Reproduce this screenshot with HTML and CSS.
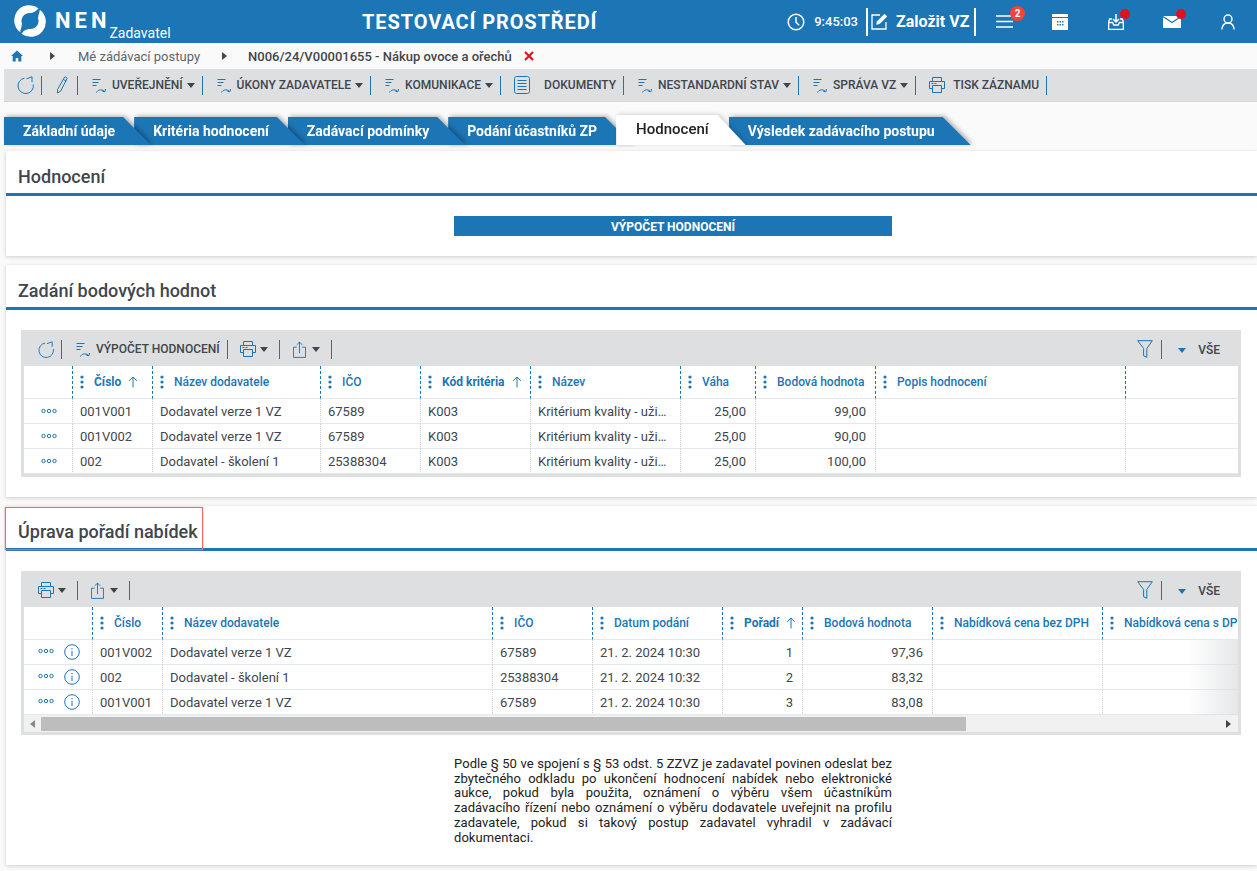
FILE: index.html

```html
<!DOCTYPE html>
<html lang="cs">
<head>
  <meta charset="UTF-8" />
  <meta name="viewport" content="width=device-width, initial-scale=1.0"/>
  <title>Hodnocení | NEN</title>
  <link rel="stylesheet" href="styles.css">
</head>
<body>

<svg class="defs" aria-hidden="true">
  <symbol id="i-refresh" viewBox="0 0 18 18"><path d="M7.500 2.200A7.700 7.700 0 1 0 16.300 8.500M9.500 2.800l5.500-2v5.400" fill="none" stroke="currentColor"/></symbol>
  <symbol id="i-pencil" viewBox="0 0 12 18"><path d="M8.500 1.200c1-.8 2.800.2 2.400 1.600L4.600 15.200 1.400 17l.2-3.600zM7.300 3.400l3 1.700" fill="none" stroke="currentColor"/></symbol>
  <symbol id="i-flow" viewBox="0 0 14 16"><path d="M0.500 2.500h8M0.500 5.500h6M0.500 8.500h4M4.500 15.500c1.200-2.800 5-3.500 7.500-1.500M13.500 12l-.6 2.800-2.600-.5" fill="none" stroke="currentColor"/></symbol>
  <symbol id="i-print" viewBox="0 0 16 16"><path d="M3.500 4.500v-4h9v4M3.500 11.500h-3v-7h15v7h-3M3.500 8.500h9v7h-9z" fill="none" stroke="currentColor"/><path d="M2.500 6h2v1h-2zM5.500 6h2v1h-2z" fill="currentColor"/></symbol>
  <symbol id="i-doc" viewBox="0 0 16 18"><path d="M2.500 .5h11c1 0 2 .8 2 2v13c0 1.200-1 2-2 2h-11c-1 0-2-.8-2-2v-13c0-1.200 1-2 2-2zM3.500 4.500h9M3.500 7.500h9M3.500 10.500h9M3.500 13.500h9" fill="none" stroke="currentColor"/></symbol>
  <symbol id="i-share" viewBox="0 0 14 18"><path d="M4 6.500H.5v11h13v-11H10M7 13V1M4 4l3-3 3 3" fill="none" stroke="currentColor"/></symbol>
  <symbol id="i-filter" viewBox="0 0 16 18"><path d="M.7.700h14.600L9.800 8.500v8.800L6.600 15.800V8.500z" fill="none" stroke="currentColor"/></symbol>
  <symbol id="i-dots" viewBox="0 0 16 6"><g fill="none" stroke="currentColor"><circle cx="2.500" cy="3" r="1.700"/><circle cx="8" cy="3" r="1.700"/><circle cx="13.500" cy="3" r="1.700"/></g></symbol>
  <symbol id="i-info" viewBox="0 0 16 16"><circle cx="8" cy="8" r="7.300" fill="none" stroke="currentColor"/><path d="M7.500 4h1v1.200h-1zM7.500 6.800h1v5.200h-1z" fill="currentColor"/></symbol>
  <symbol id="i-up" viewBox="0 0 10 12"><path d="M5 11.500V1M1.200 4.800 5 1l3.800 3.800" fill="none" stroke="currentColor"/></symbol>
  <symbol id="i-grip" viewBox="0 0 4 14"><circle cx="2" cy="2" r="1.600" fill="currentColor"/><circle cx="2" cy="7" r="1.600" fill="currentColor"/><circle cx="2" cy="12" r="1.600" fill="currentColor"/></symbol>
</svg>

<header class="topbar">
  <div class="brand">
    <svg class="logo" viewBox="0 0 34 34">
      <path d="M26 3.500A16 16 0 0 0 6.500 29C7 26 8 24 8.500 20A8.500 8.500 0 0 1 17 8.500C20 8.500 24 7 26 3.500z" fill="#fff"/>
      <path d="M26 3.500A16 16 0 0 0 6.500 29C7 26 8 24 8.500 20A8.500 8.500 0 0 1 17 8.500C20 8.500 24 7 26 3.500z" fill="#fff" transform="rotate(180 17 17)"/>
    </svg>
    <span class="brand-name">NEN</span>
    <span class="brand-role">Zadavatel</span>
  </div>
  <div class="env-title">TESTOVACÍ PROSTŘEDÍ</div>
  <div class="top-right">
    <svg class="clock" viewBox="0 0 18 18"><circle cx="9" cy="9" r="7.800" fill="none" stroke="#fff" stroke-width="1.500"/><path d="M9 4v5.300l3.200 3" fill="none" stroke="#fff" stroke-width="1.500"/></svg>
    <span class="clock-time">9:45:03</span>
    <a class="new-vz">
      <svg class="edit" viewBox="0 0 17 17"><path d="M15 9v7H1V2h8" fill="none" stroke="#fff" stroke-width="1.300"/><path d="M13.500.8l2.700 2.700-7.500 7.500-3.500.8.800-3.500z" fill="#fff"/></svg>
      Založit VZ
    </a>
    <div class="top-icon">
      <svg class="ti-menu" viewBox="0 0 17 15"><path d="M0 2h17M0 7.500h17M0 13h17" stroke="#fff" stroke-width="1.500"/></svg>
      <span class="badge">2</span>
    </div>
    <div class="top-icon">
      <svg class="ti-cal" viewBox="0 0 16 16"><path d="M0 0h16v16H0z" fill="#fff"/><path d="M0 3.500h16" stroke="#1c75b5"/><path d="M5 7h1.500v1.500H5zM7.500 7H9v1.500H7.500zM10 7h1.500v1.500H10zM5 10h1.500v1.500H5zM7.500 10H9v1.500H7.500zM10 10h1.500v1.500H10z" fill="#1c75b5"/></svg>
    </div>
    <div class="top-icon">
      <svg class="ti-inbox" viewBox="0 0 16 16"><path d="M4 5H1.500L.7 8.500v7h14.600v-7L14.500 5H12" fill="none" stroke="#fff" stroke-width="1.300"/><path d="M.7 8.500h4l1 2.500h4.600l1-2.500h4" fill="none" stroke="#fff" stroke-width="1.300"/><path d="M8 0v7.500M5 5l3 3 3-3" fill="none" stroke="#fff" stroke-width="1.500"/></svg>
      <span class="dot"></span>
    </div>
    <div class="top-icon">
      <svg class="ti-mail" viewBox="0 0 18 12"><path d="M0 0h18v12H0z" fill="#fff"/><path d="M0 .5l9 6 9-6" fill="none" stroke="#1c75b5" stroke-width="1.200"/></svg>
      <span class="dot"></span>
    </div>
    <div class="top-icon">
      <svg class="ti-user" viewBox="0 0 14 16"><circle cx="7" cy="5" r="4" fill="none" stroke="#fff" stroke-width="1.400"/><path d="M.8 15.500c.4-4 2.800-6.500 6.200-6.500s5.800 2.500 6.200 6.500" fill="none" stroke="#fff" stroke-width="1.400"/></svg>
    </div>
  </div>
</header>

<nav class="crumbs">
  <svg class="home" viewBox="0 0 12 12"><path d="M6 .5 0 6h1.700v5.500h3V8h2.600v3.500h3V6H12z" fill="#1c75b5"/></svg>
  <span class="crumb-arrow first"></span>
  <span class="crumb">Mé zádávací postupy</span>
  <span class="crumb-arrow"></span>
  <span class="crumb current">N006/24/V00001655 - Nákup ovoce a ořechů</span>
  <svg class="crumb-close" viewBox="0 0 10 10"><path d="M1 1l8 8M9 1l-8 8" stroke="#e3141e" stroke-width="2.200"/></svg>
</nav>

<div class="toolbar">
  <div class="tool tool-first"><svg class="ic ic18"><use href="#i-refresh"/></svg></div>
  <div class="tool tool-pencil"><svg class="ic ic-pencil"><use href="#i-pencil"/></svg></div>
  <div class="tool"><svg class="ic ic-flow"><use href="#i-flow"/></svg><span>UVEŘEJNĚNÍ</span><i class="caret"></i></div>
  <div class="tool"><svg class="ic ic-flow"><use href="#i-flow"/></svg><span>ÚKONY ZADAVATELE</span><i class="caret"></i></div>
  <div class="tool"><svg class="ic ic-flow"><use href="#i-flow"/></svg><span>KOMUNIKACE</span><i class="caret"></i></div>
  <div class="tool tool-doc"><svg class="ic ic-doc"><use href="#i-doc"/></svg><span>DOKUMENTY</span></div>
  <div class="tool"><svg class="ic ic-flow"><use href="#i-flow"/></svg><span>NESTANDARDNÍ STAV</span><i class="caret"></i></div>
  <div class="tool"><svg class="ic ic-flow"><use href="#i-flow"/></svg><span>SPRÁVA VZ</span><i class="caret"></i></div>
  <div class="tool tool-print"><svg class="ic ic16"><use href="#i-print"/></svg><span>TISK ZÁZNAMU</span></div>
</div>

<div class="tabs">
  <div class="tab-wrap t1"><a class="tab">Základní údaje</a></div>
  <div class="tab-wrap t2"><a class="tab">Kritéria hodnocení</a></div>
  <div class="tab-wrap t3"><a class="tab">Zadávací podmínky</a></div>
  <div class="tab-wrap t4"><a class="tab">Podání účastníků ZP</a></div>
  <div class="tab-wrap t5"><a class="tab tab-active">Hodnocení</a></div>
  <div class="tab-wrap t6"><a class="tab">Výsledek zadávacího postupu</a></div>
</div>

<section class="card">
  <h2 class="card-title">Hodnocení</h2>
  <div class="card-body">
    <a class="btn-wide">VÝPOČET HODNOCENÍ</a>
  </div>
</section>

<section class="card">
  <h2 class="card-title">Zadání bodových hodnot</h2>
  <div class="card-body">
    <div class="grid">
      <div class="grid-bar">
        <div class="tool tool-g1"><svg class="ic ic17"><use href="#i-refresh"/></svg></div>
        <div class="tool"><svg class="ic ic-flow"><use href="#i-flow"/></svg><span>VÝPOČET HODNOCENÍ</span></div>
        <div class="tool tool-p"><svg class="ic ic16"><use href="#i-print"/></svg><i class="caret"></i></div>
        <div class="tool tool-sm"><svg class="ic ic-share"><use href="#i-share"/></svg><i class="caret"></i></div>
        <div class="bar-right">
          <svg class="ic ic-filter"><use href="#i-filter"/></svg>
          <i class="bar-sep"></i>
          <i class="caret caret-blue"></i>
          <span>VŠE</span>
        </div>
      </div>
      <div class="grid-view">
        <table class="tbl tbl-a">
          <colgroup>
            <col class="w48"><col class="w80"><col class="w168"><col class="w100"><col class="w110"><col class="w150"><col class="w75"><col class="w120"><col class="w250"><col class="w113">
          </colgroup>
          <thead>
            <tr>
              <th></th>
              <th><svg class="grip"><use href="#i-grip"/></svg><b>Číslo</b><svg class="sort"><use href="#i-up"/></svg></th>
              <th><svg class="grip"><use href="#i-grip"/></svg>Název dodavatele</th>
              <th><svg class="grip"><use href="#i-grip"/></svg>IČO</th>
              <th><svg class="grip"><use href="#i-grip"/></svg><b>Kód kritéria</b><svg class="sort"><use href="#i-up"/></svg></th>
              <th><svg class="grip"><use href="#i-grip"/></svg>Název</th>
              <th><svg class="grip"><use href="#i-grip"/></svg>Váha</th>
              <th><svg class="grip"><use href="#i-grip"/></svg>Bodová hodnota</th>
              <th><svg class="grip"><use href="#i-grip"/></svg>Popis hodnocení</th>
              <th></th>
            </tr>
          </thead>
          <tbody>
            <tr>
              <td class="acts"><svg class="more"><use href="#i-dots"/></svg></td>
              <td>001V001</td><td>Dodavatel verze 1 VZ</td><td>67589</td><td>K003</td><td>Kritérium kvality - uživatelská</td><td class="num">25,00</td><td class="num">99,00</td><td></td><td></td>
            </tr>
            <tr>
              <td class="acts"><svg class="more"><use href="#i-dots"/></svg></td>
              <td>001V002</td><td>Dodavatel verze 1 VZ</td><td>67589</td><td>K003</td><td>Kritérium kvality - uživatelská</td><td class="num">25,00</td><td class="num">90,00</td><td></td><td></td>
            </tr>
            <tr>
              <td class="acts"><svg class="more"><use href="#i-dots"/></svg></td>
              <td>002</td><td>Dodavatel - školení 1</td><td>25388304</td><td>K003</td><td>Kritérium kvality - uživatelská</td><td class="num">25,00</td><td class="num">100,00</td><td></td><td></td>
            </tr>
          </tbody>
        </table>
      </div>
    </div>
  </div>
</section>

<section class="card card-last">
  <h2 class="card-title">Úprava pořadí nabídek</h2>
  <div class="highlight"></div>
  <div class="card-body">
    <div class="grid">
      <div class="grid-bar">
        <div class="tool tool-g2"><svg class="ic ic16"><use href="#i-print"/></svg><i class="caret"></i></div>
        <div class="tool tool-sm"><svg class="ic ic-share"><use href="#i-share"/></svg><i class="caret"></i></div>
        <div class="bar-right">
          <svg class="ic ic-filter"><use href="#i-filter"/></svg>
          <i class="bar-sep"></i>
          <i class="caret caret-blue"></i>
          <span>VŠE</span>
        </div>
      </div>
      <div class="grid-view">
        <table class="tbl tbl-b">
          <colgroup>
            <col class="w68"><col class="w70"><col class="w330"><col class="w100"><col class="w130"><col class="w80"><col class="w130"><col class="w170"><col class="w170">
          </colgroup>
          <thead>
            <tr>
              <th></th>
              <th><svg class="grip"><use href="#i-grip"/></svg>Číslo</th>
              <th><svg class="grip"><use href="#i-grip"/></svg>Název dodavatele</th>
              <th><svg class="grip"><use href="#i-grip"/></svg>IČO</th>
              <th><svg class="grip"><use href="#i-grip"/></svg>Datum podání</th>
              <th><svg class="grip"><use href="#i-grip"/></svg><b>Pořadí</b><svg class="sort"><use href="#i-up"/></svg></th>
              <th><svg class="grip"><use href="#i-grip"/></svg>Bodová hodnota</th>
              <th><svg class="grip"><use href="#i-grip"/></svg>Nabídková cena bez DPH</th>
              <th><svg class="grip"><use href="#i-grip"/></svg>Nabídková cena s DPH</th>
            </tr>
          </thead>
          <tbody>
            <tr>
              <td class="acts"><svg class="more"><use href="#i-dots"/></svg><svg class="info"><use href="#i-info"/></svg></td>
              <td>001V002</td><td>Dodavatel verze 1 VZ</td><td>67589</td><td>21. 2. 2024 10:30</td><td class="num">1</td><td class="num">97,36</td><td></td><td></td>
            </tr>
            <tr>
              <td class="acts"><svg class="more"><use href="#i-dots"/></svg><svg class="info"><use href="#i-info"/></svg></td>
              <td>002</td><td>Dodavatel - školení 1</td><td>25388304</td><td>21. 2. 2024 10:32</td><td class="num">2</td><td class="num">83,32</td><td></td><td></td>
            </tr>
            <tr>
              <td class="acts"><svg class="more"><use href="#i-dots"/></svg><svg class="info"><use href="#i-info"/></svg></td>
              <td>001V001</td><td>Dodavatel verze 1 VZ</td><td>67589</td><td>21. 2. 2024 10:30</td><td class="num">3</td><td class="num">83,08</td><td></td><td></td>
            </tr>
          </tbody>
        </table>
        <div class="fade"></div>
      </div>
      <div class="scrollbar">
        <i class="sb-left"></i>
        <div class="sb-thumb"></div>
        <i class="sb-right"></i>
      </div>
    </div>
    <p class="note">Podle § 50 ve spojení s § 53 odst. 5 ZZVZ je zadavatel povinen odeslat bez zbytečného odkladu po ukončení hodnocení nabídek nebo elektronické aukce, pokud byla použita, oznámení o výběru všem účastníkům zadávacího řízení nebo oznámení o výběru dodavatele uveřejnit na profilu zadavatele, pokud si takový postup zadavatel vyhradil v zadávací dokumentaci.</p>
  </div>
</section>

</body>
</html>
```

FILE: styles.css

```css
* {
  box-sizing: border-box;
}
body {
  margin: 0;
  font-family: Roboto, 'Liberation Sans', sans-serif;
  font-size: 12px;
  color: #3f464d;
  background-color: #fafafa;
}
.defs {
  display: none;
}

/* top bar */
.topbar {
  display: flex;
  align-items: center;
  height: 43px;
  background-color: #1c75b5;
  color: #fff;
}
.brand {
  display: flex;
  width: 362px;
  height: 43px;
  padding-left: 14px;
}
.logo {
  width: 32px;
  height: 32px;
  margin-top: 5px;
}
.brand-name {
  margin: 5px -1px 0 9px;
  font-size: 22px;
  font-weight: 700;
  letter-spacing: 4px;
  line-height: 32px;
}
.brand-role {
  margin: 26px 0 0 0;
  font-size: 14px;
  line-height: 15px;
}
.env-title {
  font-size: 20px;
  font-weight: 700;
  letter-spacing: 0.9px;
  white-space: nowrap;
}
.top-right {
  display: flex;
  align-items: center;
  margin-left: auto;
  padding-right: 1px;
}
.clock {
  width: 18px;
  height: 18px;
}
.clock-time {
  margin: 0 8px 0 9px;
  font-size: 13px;
  font-weight: 500;
}
.new-vz {
  display: flex;
  align-items: center;
  gap: 8px;
  height: 28px;
  width: 110px;
  padding: 0 0 0 3px;
  border-left: 2px solid #fff;
  border-right: 2px solid #fff;
  font-size: 16px;
  font-weight: 700;
  white-space: nowrap;
}
.edit {
  width: 17px;
  height: 17px;
}
.top-icon {
  position: relative;
  display: flex;
  align-items: center;
  justify-content: center;
  width: 56px;
  height: 43px;
}
.ti-menu { width: 17px; height: 15px; }
.ti-cal { width: 16px; height: 16px; }
.ti-inbox { width: 16px; height: 16px; }
.ti-mail { width: 18px; height: 12px; }
.ti-user { width: 14px; height: 16px; }
.badge {
  position: absolute;
  top: 6px;
  left: 34px;
  width: 15px;
  height: 15px;
  border-radius: 50%;
  background-color: #f44336;
  color: #fff;
  font-size: 10px;
  font-weight: 700;
  line-height: 15px;
  text-align: center;
}
.dot {
  position: absolute;
  top: 9px;
  left: 32px;
  width: 10px;
  height: 10px;
  border-radius: 50%;
  background-color: #e01020;
}

/* breadcrumbs */
.crumbs {
  display: flex;
  align-items: center;
  height: 26px;
  padding-left: 11px;
  font-size: 13px;
}
.home {
  width: 12px;
  height: 12px;
}
.crumb-arrow {
  width: 0;
  height: 0;
  margin: 0 21px 0 22px;
  border-left: 5px solid #3f464d;
  border-top: 4px solid transparent;
  border-bottom: 4px solid transparent;
}
.crumb-arrow.first {
  margin: 0 23px 0 27px;
}
.crumb {
  color: #5d646b;
  white-space: nowrap;
}
.crumb.current {
  color: #3f464d;
  font-weight: 500;
}
.crumb-close {
  width: 10px;
  height: 10px;
  margin-left: 12px;
}

/* toolbars */
.toolbar {
  display: flex;
  align-items: center;
  height: 33px;
  margin-left: 4px;
  background-color: #dddfe1;
  border-bottom: 1px solid #d5d7d9;
}
.tool {
  display: flex;
  align-items: center;
  height: 19px;
  padding: 0 7px 0 14px;
  border-right: 1px solid #1c75b5;
  font-weight: 500;
  white-space: nowrap;
}
.tool span {
  margin-left: 6px;
}
.tool-first {
  padding-left: 13px;
  padding-right: 6px;
}
.tool-pencil {
  padding-right: 9px;
}
.tool-doc {
  padding-left: 13px;
}
.tool-doc span {
  margin-left: 14px;
}
.tool-print {
  padding-left: 13px;
}
.tool-print span {
  margin-left: 8px;
}
.ic {
  color: #1c75b5;
  flex: none;
}
.ic18 { width: 18px; height: 18px; }
.ic17 { width: 17px; height: 17px; }
.ic16 { width: 16px; height: 16px; }
.ic-pencil { width: 12px; height: 18px; }
.ic-flow { width: 14px; height: 16px; }
.ic-doc { width: 16px; height: 18px; }
.ic-share { width: 13px; height: 17px; }
.ic-filter { width: 16px; height: 18px; }
.caret {
  width: 0;
  height: 0;
  margin-left: 4px;
  border-top: 5px solid #3f464d;
  border-left: 4px solid transparent;
  border-right: 4px solid transparent;
}
.caret-blue {
  margin: 2px 12px 0 0;
  border-top-color: #1c75b5;
}

/* tabs */
.tabs {
  display: flex;
  align-items: flex-end;
  height: 43px;
  padding: 0 0 0 4px;
}
.tab-wrap {
  position: relative;
  margin-right: -17px;
  filter: drop-shadow(2px -1px 2px rgba(0, 0, 0, 0.3));
}
.tab {
  display: block;
  height: 28px;
  padding: 0 36px 0 19px;
  background-color: #1c75b5;
  color: #fff;
  font-size: 14px;
  font-weight: 700;
  line-height: 29px;
  white-space: nowrap;
  clip-path: polygon(0 0, calc(100% - 28px) 0, 100% 100%, 0 100%);
}
.t1 { z-index: 6; }
.t2 { z-index: 5; }
.t3 { z-index: 4; }
.t4 { z-index: 3; }
.t5 { z-index: 7; filter: drop-shadow(2px -1px 2px rgba(0, 0, 0, 0.15)); }
.t6 { z-index: 1; }
.tab-active {
  height: 30px;
  padding: 0 37px 0 20px;
  background-color: #fff;
  color: #222;
  font-size: 15px;
  font-weight: 500;
  line-height: 29px;
}

/* cards */
.card {
  position: relative;
  margin: 6px 0 9px 6px;
  background-color: #fff;
  box-shadow: 0 1px 4px rgba(0, 0, 0, 0.18);
}
.card-title {
  height: 45px;
  margin: 0;
  padding: 0 0 0 12px;
  border-bottom: 3px solid #1c75b5;
  color: #3f464d;
  font-size: 18px;
  font-weight: 500;
  line-height: 51px;
}
.card + .card {
  margin-top: 0;
}
.card-body {
  padding: 20px 16px 20px 15px;
}
.btn-wide {
  display: block;
  width: 438px;
  height: 20px;
  margin-left: 433px;
  background-color: #1c75b5;
  color: #fff;
  font-weight: 700;
  line-height: 22px;
  text-align: center;
}
.highlight {
  position: absolute;
  top: 1px;
  left: -1px;
  width: 198px;
  height: 43px;
  border: 1px solid #f4646c;
  box-shadow: 0 0 1px #f4646c;
}

/* data grids */
.grid {
  padding: 0 3px 3px 3px;
  background-color: #dddfe1;
}
.grid-bar {
  display: flex;
  align-items: center;
  height: 36px;
  padding-top: 2px;
}
.tool-g1 {
  padding-left: 14px;
  padding-right: 6px;
}
.tool-g2 {
  padding-right: 11px;
}
.tool-p {
  padding-left: 12px;
  padding-right: 11px;
}
.tool-sm {
  padding-left: 13px;
  padding-right: 11px;
}
.tool-sm .caret {
  margin-left: 6px;
}
.bar-right {
  display: flex;
  align-items: center;
  margin-left: auto;
  padding-right: 18px;
  font-weight: 500;
}
.bar-right span {
  margin-top: 2px;
}
.bar-sep {
  width: 1px;
  height: 19px;
  margin: 0 16px 0 8px;
  background-color: #1c75b5;
}
.grid-view {
  position: relative;
  overflow: hidden;
  background-color: #fff;
}
.tbl {
  border-collapse: separate;
  border-spacing: 0;
  table-layout: fixed;
  background-color: #fff;
}
.tbl-a { width: 1214px; }
.tbl-b { width: 1248px; }
.w48 { width: 48px; }
.w68 { width: 68px; }
.w70 { width: 70px; }
.w75 { width: 75px; }
.w80 { width: 80px; }
.w100 { width: 100px; }
.w110 { width: 110px; }
.w113 { width: 113px; }
.w120 { width: 120px; }
.w130 { width: 130px; }
.w150 { width: 150px; }
.w168 { width: 168px; }
.w170 { width: 170px; }
.w250 { width: 250px; }
.w330 { width: 330px; }
.tbl th {
  height: 33px;
  padding: 0 0 0 7px;
  border-left: 1px dashed #1c75b5;
  border-bottom: 1px solid #e2e8ee;
  color: #1c75b5;
  font-size: 12px;
  font-weight: 500;
  text-align: left;
  white-space: nowrap;
  overflow: hidden;
}
.tbl th:first-child, .tbl td:first-child {
  border-left: none;
}
.tbl th b {
  font-weight: 700;
}
.tbl td {
  height: 25px;
  padding: 0 9px 0 7px;
  border-left: 1px dotted #cfd3d6;
  border-bottom: 1px solid #e2e8ee;
  color: #3f464d;
  font-size: 13px;
  white-space: nowrap;
  overflow: hidden;
  text-overflow: ellipsis;
}
.tbl td.num {
  text-align: right;
}
.tbl td.acts {
  padding: 0 0 0 17px;
  text-overflow: clip;
}
.tbl-b td.acts {
  padding-left: 14px;
}
.grip {
  width: 4px;
  height: 14px;
  margin-right: 10px;
  color: #1c75b5;
  vertical-align: -3px;
}
.sort {
  width: 10px;
  height: 12px;
  margin-left: 7px;
  color: #1c75b5;
  vertical-align: -2px;
}
.more {
  width: 16px;
  height: 6px;
  color: #1c75b5;
  vertical-align: 2px;
}
.info {
  width: 16px;
  height: 16px;
  margin-left: 10px;
  color: #1c75b5;
  vertical-align: -4px;
}
.fade {
  position: absolute;
  top: 33px;
  right: 0;
  bottom: 0;
  width: 50px;
  background: linear-gradient(to right, rgba(221, 223, 225, 0), rgba(221, 223, 225, 0.75));
}
.scrollbar {
  position: relative;
  display: flex;
  align-items: center;
  height: 17px;
  background-color: #f1f1f1;
}
.sb-left, .sb-right {
  position: absolute;
  width: 0;
  height: 0;
  border-top: 4px solid transparent;
  border-bottom: 4px solid transparent;
}
.sb-left {
  left: 6px;
  border-right: 5px solid #888;
}
.sb-right {
  right: 7px;
  border-left: 5px solid #444;
}
.sb-thumb {
  width: 925px;
  height: 14px;
  margin-left: 17px;
  background-color: #bdbdbd;
}
.note {
  width: 438px;
  margin: 22px 0 0 433px;
  color: #222;
  font-size: 13px;
  letter-spacing: 0.06px;
  line-height: 14.700px;
  text-align: justify;
}
```
